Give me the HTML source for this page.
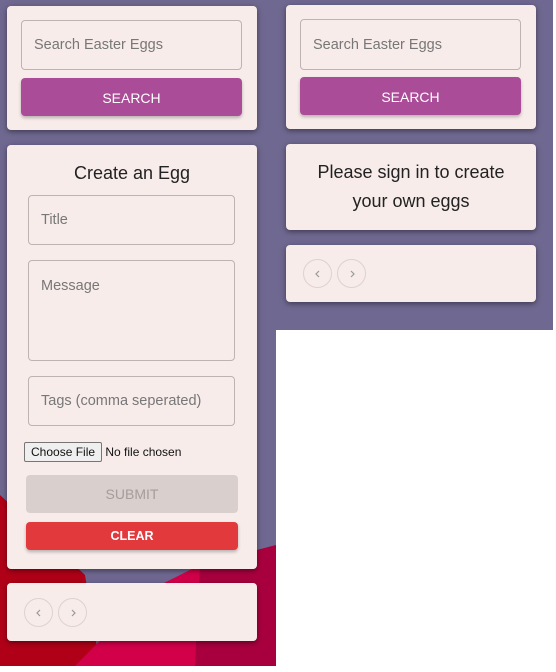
<!DOCTYPE html>
<html><head><style>
*{box-sizing:border-box;margin:0;padding:0}
body{width:556px;height:672px;background:#fff;position:relative;overflow:hidden;font-family:"Liberation Sans",Arial,sans-serif}
.bg{position:absolute;left:0;top:0}
.card{position:absolute;background:#f7ecea;border-radius:4px;box-shadow:0 2px 4px rgba(0,0,0,.3),0 1px 8px rgba(0,0,0,.15)}
.inp{position:absolute;border:1px solid #bdb3b2;border-radius:4px;color:#777;font-size:14.5px;padding-left:12px}
.btn{position:absolute;border-radius:4px;color:#fff;font-size:14px;text-align:center;box-shadow:0 2px 3px rgba(0,0,0,.25)}
.pg{position:absolute;width:29px;height:29px;border:1px solid #ddd2d0;border-radius:50%}
.pg svg{position:absolute;left:9px;top:9px}
</style></head><body>
<svg class="bg" width="556" height="672">
<rect x="0" y="0" width="276" height="666" fill="#6f6890"/>
<rect x="276" y="0" width="277" height="330" fill="#6f6890"/>
<polygon points="0,495 85,575 100,666 0,666" fill="#b00018"/>
<polygon points="150,590 200,565 200,666 75,666" fill="#d20049"/>
<polygon points="200,565 276,545 276,666 195,666" fill="#a8003e"/>
</svg>

<div class="card" style="left:7px;top:6px;width:250px;height:124px"></div>
<div class="inp" style="left:21px;top:20px;width:221px;height:50px;line-height:49px">Search Easter Eggs</div>
<div class="btn" style="left:21px;top:78px;width:221px;height:38px;line-height:40px;background:#ab4c98">SEARCH</div>

<div class="card" style="left:7px;top:145px;width:250px;height:424px"></div>
<div style="position:absolute;left:7px;top:163px;width:250px;text-align:center;font-size:18px;color:#222">Create an Egg</div>
<div class="inp" style="left:28px;top:195px;width:207px;height:50px;line-height:49px">Title</div>
<div class="inp" style="left:28px;top:260px;width:207px;height:101px;padding-top:17px">Message</div>
<div class="inp" style="left:28px;top:376px;width:207px;height:50px;line-height:49px">Tags (comma seperated)</div>
<div style="position:absolute;left:24px;top:442px;font-size:12px;color:#111;white-space:nowrap"><span style="display:inline-block;border:1px solid #767676;background:#efefef;border-radius:2px;padding:1px 6px;height:20px;line-height:16px">Choose File</span> No file chosen</div>
<div class="btn" style="left:26px;top:475px;width:212px;height:38px;line-height:38px;background:#d9cfcd;color:#a59c9b;box-shadow:none;font-size:14px">SUBMIT</div>
<div class="btn" style="left:26px;top:522px;width:212px;height:28px;line-height:28px;background:#e23a3c;font-size:12.5px;font-weight:bold">CLEAR</div>

<div class="card" style="left:7px;top:583px;width:250px;height:58px"></div>
<div class="pg" style="left:24px;top:598px"><svg width="10" height="10"><path d="M6 2L3 5L6 8" fill="none" stroke="#999" stroke-width="1.2"/></svg></div>
<div class="pg" style="left:58px;top:598px"><svg width="10" height="10"><path d="M4 2L7 5L4 8" fill="none" stroke="#999" stroke-width="1.2"/></svg></div>

<div class="card" style="left:286px;top:5px;width:250px;height:124px"></div>
<div class="inp" style="left:300px;top:19px;width:221px;height:51px;line-height:50px">Search Easter Eggs</div>
<div class="btn" style="left:300px;top:77px;width:221px;height:38px;line-height:40px;background:#ab4c98">SEARCH</div>

<div class="card" style="left:286px;top:144px;width:250px;height:86px"></div>
<div style="position:absolute;left:286px;top:158px;width:250px;text-align:center;font-size:18px;line-height:29px;color:#222">Please sign in to create<br>your own eggs</div>

<div class="card" style="left:286px;top:245px;width:250px;height:57px"></div>
<div class="pg" style="left:303px;top:259px"><svg width="10" height="10"><path d="M6 2L3 5L6 8" fill="none" stroke="#999" stroke-width="1.2"/></svg></div>
<div class="pg" style="left:337px;top:259px"><svg width="10" height="10"><path d="M4 2L7 5L4 8" fill="none" stroke="#999" stroke-width="1.2"/></svg></div>
</body></html>
